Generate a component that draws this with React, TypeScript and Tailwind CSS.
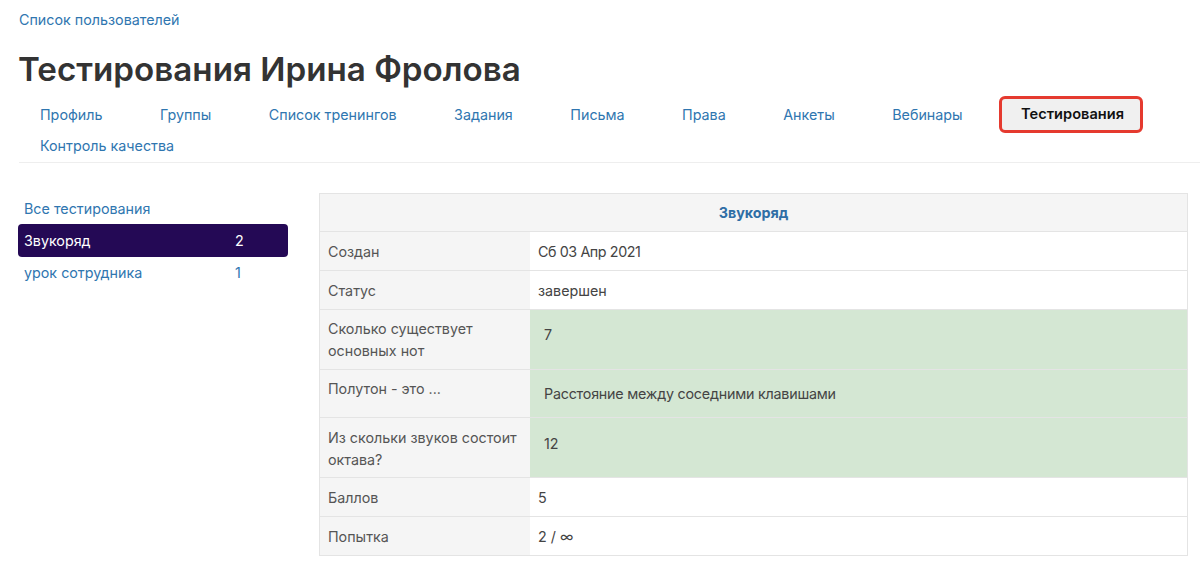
const tabs = ['Профиль', 'Группы', 'Список тренингов', 'Задания', 'Письма', 'Права', 'Анкеты', 'Вебинары'];

const labelCell = 'w-[210px] shrink-0 bg-[#f5f5f5] px-2 text-[#555]';

function Row({ label, value, valueClass = '' }: { label: string; value: string; valueClass?: string }) {
  return (
    <div className="flex h-[39px] items-center border-t border-[#e4e4e4]">
      <div className={`${labelCell} flex h-full items-center`}>{label}</div>
      <div className={`px-2 text-[#444] ${valueClass}`}>{value}</div>
    </div>
  );
}

function AnswerRow({ label, value, height, labelPad, pad }: { label: string; value: string; height: string; labelPad: string; pad: string }) {
  return (
    <div className={`flex border-t border-[#e4e4e4] ${height}`}>
      <div className={`${labelCell} leading-[22px] ${labelPad}`}>{label}</div>
      <div className={`flex-1 bg-[#d4e7d3] text-[#444] ${pad}`}>{value}</div>
    </div>
  );
}

export default function App() {
  return (
    <div className="h-[568px] w-[1200px] overflow-hidden bg-white font-['Inter','Noto_Sans',sans-serif] text-[14.3px] text-[#333]">
      <div className="pl-[19px] pt-[9px]">
        <a className="text-[#2f76b0]">Список пользователей</a>
        <h1 className="-ml-px mt-[16px] text-[33.2px] font-semibold leading-[46px] text-[#333]">Тестирования Ирина Фролова</h1>
        <nav className="mt-[4px] flex flex-wrap border-b border-[#eeeeee] pb-[1px]">
          {tabs.map(t => (
            <a key={t} className="mr-[15.5px] flex h-[36px] items-center px-[21px] text-[#2f76b0]">{t}</a>
          ))}
          <a className="flex h-[37px] items-center rounded-[6px] border-[3px] border-[#e53a2f] bg-[#f0f0f0] pl-[19px] pr-[16px] text-[14.6px] font-semibold text-[#111]">Тестирования</a>
          <a className="mt-[-4px] flex h-[32px] w-full items-center px-[21px] text-[#2f76b0]">Контроль качества</a>
        </nav>
      </div>
      <div className="mt-[30px] flex items-start pl-[18px]">
        <aside className="w-[270px]">
          <a className="flex h-[31px] items-center px-[6px] text-[#2f76b0]">Все тестирования</a>
          <div className="flex h-[33px] items-center rounded-[4px] bg-[#240955] px-[6px] text-white">
            <span className="w-[211px]">Звукоряд</span>
            <span>2</span>
          </div>
          <div className="flex h-[30px] items-center px-[6px] text-[#2f76b0]">
            <span className="w-[211px]">урок сотрудника</span>
            <span>1</span>
          </div>
        </aside>
        <div className="ml-[31px] w-[869px] border border-[#e4e4e4]">
          <div className="flex h-[37px] items-center justify-center bg-[#f5f5f5] font-bold text-[#2f6ea5]">Звукоряд</div>
          <Row label="Создан" value="Сб 03 Апр 2021" valueClass="tracking-[-0.4px]" />
          <Row label="Статус" value="завершен" />
          <AnswerRow label="Сколько существует основных нот" value="7" height="h-[60px]" labelPad="pt-[8px]" pad="pl-[14px] pt-[14px]" />
          <AnswerRow label="Полутон - это ..." value="Расстояние между соседними клавишами" height="h-[48px]" labelPad="pt-[8px]" pad="pl-[14px] pt-[13px] tracking-[-0.22px]" />
          <AnswerRow label="Из скольки звуков состоит октава?" value="12" height="h-[60px]" labelPad="pt-[9px]" pad="pl-[14px] pt-[15px]" />
          <Row label="Баллов" value="5" />
          <Row label="Попытка" value="2 / ∞" />
        </div>
      </div>
    </div>
  );
}
